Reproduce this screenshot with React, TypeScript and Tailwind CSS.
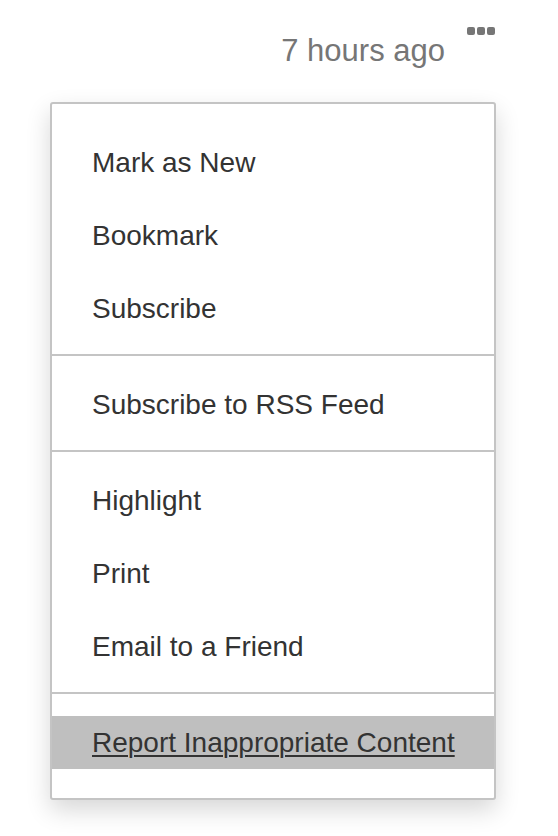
import React from "react";

type Item = { label: string; active?: boolean };

const sections: Item[][] = [
  [{ label: "Mark as New" }, { label: "Bookmark" }, { label: "Subscribe" }],
  [{ label: "Subscribe to RSS Feed" }],
  [{ label: "Highlight" }, { label: "Print" }, { label: "Email to a Friend" }],
  [{ label: "Report Inappropriate Content", active: true }],
];

export default function App() {
  return (
    <div
      className="min-h-[836px] w-[558px] bg-white pt-[27px]"
      style={{ fontFamily: '"Liberation Sans", Arial, Helvetica, sans-serif' }}
    >
      <div className="ml-[50px] w-[446px]">
        <div className="flex items-start justify-end">
          <span className="mt-[6px] mr-[22px] whitespace-nowrap text-[31px] leading-[35px] text-[#767676]">
            7 hours ago
          </span>
          <div className="flex gap-[2px] pr-[1px]">
            <span className="block h-[8px] w-[8px] rounded-[2px] bg-[#767676]" />
            <span className="block h-[8px] w-[8px] rounded-[2px] bg-[#767676]" />
            <span className="block h-[8px] w-[8px] rounded-[2px] bg-[#767676]" />
          </div>
        </div>

        <div className="mt-[34px] rounded-[3px] border-2 border-[#c4c4c4] bg-white py-[10px] shadow-[0_10px_24px_rgba(0,0,0,0.16)]">
          {sections.map((sec, si) => (
            <div
              key={si}
              className={
                "pt-[12px] pb-[9px] " +
                (si < sections.length - 1 ? "border-b-2 border-[#c4c4c4]" : "")
              }
            >
              {sec.map((it) => (
                <div key={it.label} className="py-[10px]">
                  <a
                    href="#"
                    className={
                      it.active
                        ? "block whitespace-nowrap bg-[#bfbfbf] px-[40px] text-[28px] leading-[53px] text-[#333333] underline decoration-2 underline-offset-[3px]"
                        : "block whitespace-nowrap px-[40px] text-[28px] leading-[53px] text-[#333333] no-underline"
                    }
                  >
                    {it.label}
                  </a>
                </div>
              ))}
            </div>
          ))}
        </div>
      </div>
    </div>
  );
}
